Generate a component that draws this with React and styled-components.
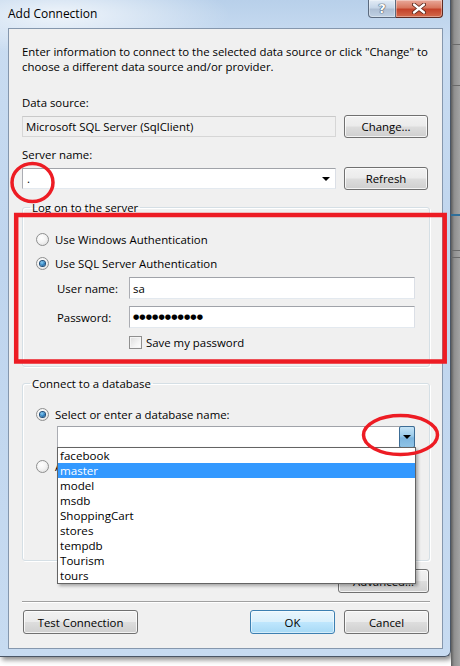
import React from 'react';
import styled, { createGlobalStyle } from 'styled-components';

const GlobalStyle = createGlobalStyle`
  html, body {
    margin: 0;
    padding: 0;
    background: #ffffff;
  }
  body {
    font-family: 'Segoe UI', 'Open Sans', 'Liberation Sans', sans-serif;
    font-size: 11.4px;
    color: #000;
  }
`;

const RED = '#ed1c24';

/**
 * Page and window frame
 */

const Page = styled.div`
  position: relative;
  width: 460px;
  height: 666px;
  overflow: hidden;
  display: flex;
  align-items: flex-start;
  background: #fff;
`;

const Window = styled.div`
  width: 451px;
  height: 657px;
  flex: none;
  display: flex;
  flex-direction: column;
  box-sizing: border-box;
  border-right: 1px solid #4a5666;
  border-bottom: 1px solid #4a5666;
  border-bottom-right-radius: 6px;
  background:
    radial-gradient(ellipse 170px 40px at 60px 14px, rgba(255, 255, 255, 0.75), rgba(255, 255, 255, 0) 100%),
    linear-gradient(180deg, #b8d0ea 0%, #c9dcf1 6%, #bfd5ee 40%, #c7dbf1 100%);
  box-shadow: 2px 3px 5px rgba(0, 0, 0, 0.45);
`;

const Backdrop = styled.div`
  flex: 1;
  height: 100%;
  display: flex;
  flex-direction: column;
  background: linear-gradient(90deg, #5d5d5d 0%, #8f8f8f 35%, #a4a4a4 100%);
`;

const BackdropLine = styled.div`
  height: ${(p) => p.$h ?? 1}px;
  margin-top: ${(p) => p.$top}px;
  background: ${(p) => p.$color || '#6a6a6a'};
`;

const TitleBar = styled.div`
  height: 28px;
  flex: none;
  display: flex;
  align-items: flex-start;
  justify-content: space-between;
  padding-left: 8px;
`;

const Title = styled.div`
  line-height: 28px;
  font-size: 12px;
  color: #000;
`;

const Captions = styled.div`
  display: flex;
  margin-right: 7px;
`;

const CaptionButton = styled.div`
  width: ${(p) => p.$w}px;
  height: 18px;
  box-sizing: border-box;
  display: flex;
  align-items: center;
  justify-content: center;
  border: 1px solid ${(p) => (p.$close ? '#5e2a22' : '#5b6a7e')};
  border-top: none;
  border-left: ${(p) => (p.$close ? 'none' : undefined)};
  border-bottom-left-radius: ${(p) => (p.$close ? 0 : 4)}px;
  border-bottom-right-radius: ${(p) => (p.$close ? 4 : 0)}px;
  background: ${(p) =>
    p.$close
      ? 'linear-gradient(180deg, #e9a99b 0%, #d8775f 45%, #c4422a 55%, #d36a4c 100%)'
      : 'linear-gradient(180deg, #e3ecf6 0%, #c6d6e8 45%, #aebfd4 55%, #bfd0e3 100%)'};
  box-shadow: inset 0 0 0 1px rgba(255, 255, 255, 0.35);
`;

const HelpGlyph = styled.span`
  font-family: 'DejaVu Sans', sans-serif;
  font-weight: bold;
  font-size: 13px;
  line-height: 1;
  color: #fff;
  text-shadow: 0 0 1px #3a4a5e, 0 0 1px #3a4a5e, 0 0 1px #3a4a5e;
`;

/**
 * Client area
 */

const Client = styled.div`
  flex: 1;
  margin: 0 7px 7px 8px;
  box-sizing: border-box;
  border: 1px solid #8597ad;
  background: #f0f0f0;
  display: flex;
  flex-direction: column;
  padding: 15px 14px 0 13px;
`;

const Intro = styled.p`
  margin: 0;
  line-height: 15px;
  width: 420px;
`;

const Label = styled.div`
  line-height: 15px;
  margin-top: ${(p) => p.$top}px;
  margin-bottom: ${(p) => p.$bottom}px;
`;

const FieldRow = styled.div`
  display: flex;
  align-items: center;
  gap: 8px;
  height: 23px;
`;

const ReadOnlyBox = styled.div`
  width: 314px;
  height: 21px;
  box-sizing: border-box;
  border: 1px solid #d6d6d6;
  border-top-color: #c9c9c9;
  background: #f0f0f0;
  padding-left: 3px;
  line-height: 19px;
`;

const ComboBox = styled.div`
  position: relative;
  width: ${(p) => p.$w}px;
  height: ${(p) => p.$h}px;
  box-sizing: border-box;
  border: 1px solid #abadb3;
  border-top-color: #a0a3a9;
  border-right-color: #dbdfe6;
  border-bottom-color: #e3e9ef;
  background: #fff;
  display: flex;
  align-items: center;
  padding-left: 4px;
  margin-top: ${(p) => p.$top || 0}px;
  margin-left: ${(p) => p.$left || 0}px;
`;

const ComboText = styled.span`
  flex: 1;
  line-height: 15px;
`;

const PlainArrow = styled.span`
  width: 0;
  height: 0;
  margin-right: 5px;
  border-left: 4px solid transparent;
  border-right: 4px solid transparent;
  border-top: 4px solid #000;
`;

const DropButton = styled.span`
  align-self: stretch;
  width: 16px;
  margin: -1px -1px -1px 0;
  box-sizing: border-box;
  border: 1px solid #3c6c95;
  border-radius: 2px;
  background: linear-gradient(180deg, #c4e3f6 0%, #9ccbea 45%, #7cb5df 55%, #8fc3e6 100%);
  display: flex;
  align-items: center;
  justify-content: center;

  &::after {
    content: '';
    width: 0;
    height: 0;
    border-left: 4px solid transparent;
    border-right: 4px solid transparent;
    border-top: 4px solid #000;
  }
`;

const Button = styled.button`
  width: ${(p) => p.$w || 84}px;
  height: ${(p) => p.$h || 23}px;
  box-sizing: border-box;
  padding: 0;
  font: inherit;
  color: #000;
  border: 1px solid ${(p) => (p.$default ? '#3c7fb1' : '#707070')};
  border-radius: 3px;
  background: ${(p) =>
    p.$default
      ? 'linear-gradient(180deg, #eaf6fd 0%, #d9f0fc 48%, #bee6fd 52%, #a7d9f5 100%)'
      : 'linear-gradient(180deg, #f2f2f2 0%, #ebebeb 48%, #dddddd 52%, #cfcfcf 100%)'};
  box-shadow: inset 0 0 0 1px rgba(255, 255, 255, ${(p) => (p.$default ? 0.5 : 0.75)});
  margin-right: ${(p) => p.$right || 0}px;
`;

/**
 * Group boxes
 */

const Group = styled.fieldset`
  margin: ${(p) => p.$top}px 0 0 0;
  padding: 0 13px ${(p) => p.$bottom}px 13px;
  width: 408px;
  box-sizing: border-box;
  border: 1px solid #d5dfe5;
  border-radius: 3px;
  box-shadow: inset 1px 1px 0 #fff, 1px 1px 0 #fff;
  display: flex;
  flex-direction: column;
`;

const Legend = styled.legend`
  padding: 0 2px;
  margin-left: -6px;
  line-height: 15px;
`;

const OptionRow = styled.label`
  display: flex;
  align-items: center;
  gap: 6px;
  height: 16px;
  margin-top: ${(p) => p.$top}px;
  margin-left: ${(p) => p.$left || 0}px;
  line-height: 15px;
`;

const Radio = styled.span`
  width: 13px;
  height: 13px;
  flex: none;
  box-sizing: border-box;
  border-radius: 50%;
  border: 1px solid #8e8f8f;
  background: radial-gradient(circle at 40% 35%, #ffffff 0%, #f4f4f4 45%, #d8d8d8 100%);
  display: flex;
  align-items: center;
  justify-content: center;

  &::after {
    content: '';
    display: ${(p) => (p.$checked ? 'block' : 'none')};
    width: 5px;
    height: 5px;
    border-radius: 50%;
    background: radial-gradient(circle at 40% 35%, #8ad0f5 0%, #2d7fc0 55%, #13406d 100%);
    box-shadow: 0 0 0 1px #1d4c78;
  }
`;

const Checkbox = styled.span`
  width: 13px;
  height: 13px;
  flex: none;
  box-sizing: border-box;
  border: 1px solid #8f8f8f;
  background: linear-gradient(135deg, #dcdcdc 0%, #f4f4f4 60%, #ffffff 100%);
  box-shadow: inset 0 0 0 1px #f5f5f5;
`;

const CredRow = styled.div`
  display: flex;
  align-items: center;
  margin-top: ${(p) => p.$top}px;
  margin-left: 21px;
`;

const CredLabel = styled.span`
  width: 72px;
  line-height: 15px;
`;

const TextInput = styled.div`
  width: 286px;
  height: 22px;
  box-sizing: border-box;
  border: 1px solid #abadb3;
  border-top-color: #a0a3a9;
  border-right-color: #dbdfe6;
  border-bottom-color: #e3e9ef;
  background: #fff;
  padding-left: 3px;
  display: flex;
  align-items: center;
  line-height: 15px;
`;

const Dots = styled.span`
  font-family: 'DejaVu Sans', sans-serif;
  font-size: 7.2px;
  letter-spacing: 0.1px;
  line-height: 1;
`;

const SaveRow = styled(OptionRow)`
  gap: 4px;
  margin-left: 93px;
`;

/**
 * Dropdown popup
 */

const DropList = styled.ul`
  position: absolute;
  top: 100%;
  left: -1px;
  width: 359px;
  margin: 0;
  padding: 0;
  list-style: none;
  box-sizing: border-box;
  border: 1px solid #646464;
  background: #fff;
  box-shadow: 2px 2px 3px rgba(0, 0, 0, 0.3);
  z-index: 5;
`;

const DropItem = styled.li`
  height: 15px;
  line-height: 15px;
  padding-left: 2px;
  font-size: 11.6px;
  color: ${(p) => (p.$selected ? '#fff' : '#000')};
  background: ${(p) => (p.$selected ? '#3399ff' : 'transparent')};
`;

const AdvancedRow = styled.div`
  display: flex;
  justify-content: flex-end;
  margin-top: 8px;
  width: 408px;
`;

const Separator = styled.div`
  margin-top: 8px;
  width: 408px;
  height: 1px;
  background: #a0a0a0;
  border-bottom: 1px solid #fff;
`;

const Footer = styled.div`
  display: flex;
  align-items: center;
  margin-top: 7px;
  width: 406px;
  margin-left: 1px;
`;

const Spacer = styled.div`
  flex: 1;
`;

const Annotations = styled.svg`
  position: absolute;
  left: 0;
  top: 0;
  pointer-events: none;
  z-index: 10;
`;

const databases = ['facebook', 'master', 'model', 'msdb', 'ShoppingCart', 'stores', 'tempdb', 'Tourism', 'tours'];

function CloseGlyph() {
  return (
    <svg width="14" height="11" viewBox="0 0 14 11">
      <path d="M2 1.5 L12 9.5 M12 1.5 L2 9.5" stroke="#5a2418" strokeWidth="4" strokeLinecap="round" />
      <path d="M2 1.5 L12 9.5 M12 1.5 L2 9.5" stroke="#ffffff" strokeWidth="2.3" strokeLinecap="round" />
    </svg>
  );
}

export default function App() {
  return (
    <>
      <GlobalStyle />
      <Page>
        <Window>
          <TitleBar>
            <Title>Add Connection</Title>
            <Captions>
              <CaptionButton $w={28}>
                <HelpGlyph>?</HelpGlyph>
              </CaptionButton>
              <CaptionButton $w={47} $close>
                <CloseGlyph />
              </CaptionButton>
            </Captions>
          </TitleBar>
          <Client>
            <Intro>
              Enter information to connect to the selected data source or click "Change" to choose a different data
              source and/or provider.
            </Intro>

            <Label $top={21} $bottom={5}>Data source:</Label>
            <FieldRow>
              <ReadOnlyBox>Microsoft SQL Server (SqlClient)</ReadOnlyBox>
              <Button>Change...</Button>
            </FieldRow>

            <Label $top={9} $bottom={5}>Server name:</Label>
            <FieldRow>
              <ComboBox $w={314} $h={21}>
                <ComboText>.</ComboText>
                <PlainArrow />
              </ComboBox>
              <Button>Refresh</Button>
            </FieldRow>

            <Group $top={10} $bottom={16}>
              <Legend>Log on to the server</Legend>
              <OptionRow $top={16}>
                <Radio />
                Use Windows Authentication
              </OptionRow>
              <OptionRow $top={8}>
                <Radio $checked />
                Use SQL Server Authentication
              </OptionRow>
              <CredRow $top={6}>
                <CredLabel>User name:</CredLabel>
                <TextInput>sa</TextInput>
              </CredRow>
              <CredRow $top={7}>
                <CredLabel>Password:</CredLabel>
                <TextInput>
                  <Dots>●●●●●●●●●●●</Dots>
                </TextInput>
              </CredRow>
              <SaveRow $top={6}>
                <Checkbox />
                Save my password
              </SaveRow>
            </Group>

            <Group $top={9} $bottom={86}>
              <Legend>Connect to a database</Legend>
              <OptionRow $top={15}>
                <Radio $checked />
                Select or enter a database name:
              </OptionRow>
              <ComboBox $w={358} $h={22} $left={21} $top={4}>
                <ComboText />
                <DropButton />
                <DropList>
                  {databases.map((name) => (
                    <DropItem key={name} $selected={name === 'master'}>
                      {name}
                    </DropItem>
                  ))}
                </DropList>
              </ComboBox>
              <OptionRow $top={10}>
                <Radio />
                Attach a database file:
              </OptionRow>
            </Group>

            <AdvancedRow>
              <Button $w={91} $h={24} $right={1}>
                Advanced...
              </Button>
            </AdvancedRow>

            <Separator />

            <Footer>
              <Button $w={115} $h={24}>
                Test Connection
              </Button>
              <Spacer />
              <Button $w={85} $h={24} $default $right={9}>
                OK
              </Button>
              <Button $w={85} $h={24}>
                Cancel
              </Button>
            </Footer>
          </Client>
        </Window>
        <Backdrop>
          <BackdropLine $top={4} $color="#ffffff" $h={0} />
          <BackdropLine $top={40} />
          <BackdropLine $top={40} />
          <BackdropLine $top={128} $color="#2f6f9a" $h={2} />
          <BackdropLine $top={34} />
          <BackdropLine $top={6} />
        </Backdrop>
        <Annotations width="460" height="666" viewBox="0 0 460 666">
          <ellipse cx="32.5" cy="182.5" rx="20.5" ry="19" fill="none" stroke={RED} strokeWidth="3.5" />
          <rect x="16.2" y="215" width="428.5" height="146.5" fill="none" stroke={RED} strokeWidth="4.5" />
          <ellipse cx="400.5" cy="435" rx="37" ry="19.5" fill="none" stroke={RED} strokeWidth="3.5" />
        </Annotations>
      </Page>
    </>
  );
}
